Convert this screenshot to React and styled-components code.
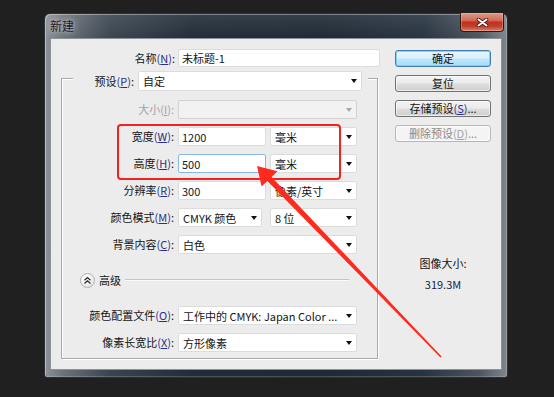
import React from "react";
import styled, { createGlobalStyle } from "styled-components";

const Global = createGlobalStyle`
  html, body { margin: 0; padding: 0; background: #202020; }
  body {
    width: 554px; height: 397px; overflow: hidden;
    font-family: "Noto Sans CJK SC", "Microsoft YaHei", sans-serif;
    font-size: 11px; color: #111;
  }
`;

const Stage = styled.div`
  position: relative;
  box-sizing: border-box;
  width: 554px;
  height: 397px;
  padding: 13px 0 0 44px;
`;

const Window = styled.div`
  box-sizing: border-box;
  width: 464px;
  height: 365px;
  display: flex;
  flex-direction: column;
  padding: 0 5px 7px 5px;
  border: 1px solid #2a3036;
  border-radius: 6px 6px 3px 3px;
  background:
    linear-gradient(to bottom, rgba(255,255,255,0.10), rgba(255,255,255,0) 26px),
    linear-gradient(to right, #8d9398 0%, #6b7279 4%, #3a4550 14%, #212c38 32%, #1e2935 60%, #27333f 82%, #4d5660 94%, #7f868c 100%);
  box-shadow: inset 1px 1px 0 rgba(255,255,255,0.35), inset -1px -1px 0 rgba(255,255,255,0.18);
`;

const TitleBar = styled.div`
  height: 24px;
  flex: none;
  display: flex;
  justify-content: space-between;
  align-items: flex-start;
`;

const Title = styled.div`
  padding-top: 4px;
  line-height: 16px;
  font-size: 12px;
  color: #1e1a2c;
  text-shadow: 0 0 4px rgba(200,202,208,0.9), 0 0 9px rgba(190,192,200,0.9);
`;

const CloseButton = styled.div`
  box-sizing: border-box;
  width: 44px;
  height: 19px;
  margin: -1px -2px 0 0;
  display: flex;
  align-items: center;
  justify-content: center;
  border: 1px solid #3b1410;
  border-top: none;
  border-radius: 0 0 4px 4px;
  background: linear-gradient(to bottom, #dd9a8a 0%, #cf6f5c 40%, #c2301b 52%, #c0412d 75%, #d8836c 100%);
  box-shadow: inset 0 0 0 1px rgba(255,200,190,0.35);
`;

const Client = styled.div`
  box-sizing: border-box;
  flex: 1;
  display: flex;
  align-items: flex-start;
  padding-top: 10px;
  background: #ececec;
  border: 1px solid #8c9298;
`;

const FormColumn = styled.div`
  width: 329px;
  display: flex;
  flex-direction: column;
`;

const NameRow = styled.div`
  display: flex;
  height: 18px;
`;

const Label = styled.div`
  box-sizing: border-box;
  width: ${(p) => p.$w}px;
  margin-right: ${(p) => p.$gap ?? 4}px;
  text-align: right;
  white-space: nowrap;
  line-height: ${(p) => p.$lh ?? 19}px;
  color: ${(p) => (p.$disabled ? "#a3a3a3" : "#141414")};
`;

const Mnemonic = styled.span`
  color: ${(p) => (p.$disabled ? "#a3a3a3" : "#2e2e86")};
`;

const Key = styled.span`
  text-decoration: underline;
`;

const Mn = ({ k, disabled }) => (
  <Mnemonic $disabled={disabled}>
    (<Key>{k}</Key>)
  </Mnemonic>
);

const TextField = styled.input`
  box-sizing: border-box;
  width: ${(p) => p.$w}px;
  height: 100%;
  margin: 0;
  padding: 0 0 0 3px;
  border: 1px solid ${(p) => (p.$focus ? "#86b7e6" : "#dcdcdc")};
  border-radius: 2px;
  background: #fff;
  font: 11px "Noto Sans CJK SC", "Microsoft YaHei", sans-serif;
  color: #141428;
  outline: none;
`;

const Select = styled.div`
  box-sizing: border-box;
  width: ${(p) => p.$w}px;
  height: 100%;
  margin-left: ${(p) => p.$ml ?? 0}px;
  display: flex;
  align-items: center;
  justify-content: space-between;
  padding: 0 4px 0 4px;
  background: ${(p) => (p.$disabled ? "#f2f2f2" : "#fff")};
  border: 1px solid ${(p) => (p.$disabled ? "#d2d2d2" : "#dcdcdc")};
  border-radius: 2px;
  white-space: nowrap;
  color: #141414;
`;

const Caret = styled.span`
  flex: none;
  width: 0;
  height: 0;
  border-left: 3.5px solid transparent;
  border-right: 3.5px solid transparent;
  border-top: 4px solid ${(p) => (p.$disabled ? "#a8a8a8" : "#111")};
`;

const GroupBox = styled.div`
  box-sizing: border-box;
  width: 317px;
  margin: 11px 0 0 10px;
  padding-bottom: 6px;
  border: 1px solid #a9a9a9;
  box-shadow: inset 1px 1px 0 #fff, 1px 1px 0 #fff;
  display: flex;
  flex-direction: column;
`;

const PresetRow = styled.div`
  display: flex;
  width: 295px;
  height: 20px;
  margin: -8px 0 9px 11px;
  background: #ececec;
`;

const Rows = styled.div`
  display: flex;
  flex-direction: column;
  gap: 8px;
`;

const Row = styled.div`
  display: flex;
  height: 19px;
`;

const AdvRow = styled.div`
  display: flex;
  align-items: center;
  height: 14px;
  margin: 19px 28px 19px 18px;
`;

const AdvIcon = styled.div`
  box-sizing: border-box;
  width: 15px;
  height: 15px;
  flex: none;
  border-radius: 50%;
  border: 1px solid #b0b0b0;
  background: radial-gradient(circle at 40% 35%, #ffffff 0%, #f4f4f4 45%, #d6d6d6 100%);
  display: flex;
  align-items: center;
  justify-content: center;
`;

const AdvText = styled.span`
  margin-left: 4px;
  line-height: 14px;
  color: #141414;
`;

const AdvLine = styled.div`
  flex: 1;
  height: 1px;
  margin-left: 4px;
  background: #c4c4c4;
  border-bottom: 1px solid #fbfbfb;
`;

const ButtonColumn = styled.div`
  width: 96px;
  margin: 1px 0 0 15px;
  display: flex;
  flex-direction: column;
  gap: 8px;
`;

const Button = styled.div`
  box-sizing: border-box;
  height: 17px;
  display: flex;
  align-items: center;
  justify-content: center;
  border-radius: 3px;
  white-space: nowrap;
  border: 1px solid ${(p) => (p.$primary ? "#3d7fb3" : p.$disabled ? "#b4b8bb" : "#717171")};
  color: ${(p) => (p.$disabled ? "#8a8a8a" : "#141414")};
  background: ${(p) =>
    p.$primary
      ? "linear-gradient(to bottom, #eaf6fd 0%, #d9f0fc 48%, #bee6fd 52%, #a9dbf6 100%)"
      : p.$disabled
      ? "#f4f4f4"
      : "linear-gradient(to bottom, #f3f3f3 0%, #ebebeb 48%, #dddddd 52%, #cfcfcf 100%)"};
  box-shadow: ${(p) => (p.$primary ? "inset 0 0 0 1px rgba(120,200,240,0.8)" : "inset 0 0 0 1px rgba(255,255,255,0.6)")};
  line-height: 15px;
`;

const SizeInfo = styled.div`
  margin-top: 105px;
  display: flex;
  flex-direction: column;
  align-items: center;
  gap: 5px;
  line-height: 16px;
`;

const SizeValue = styled.span`
  color: #1c1c3e;
`;

const RedFrame = styled.div`
  position: absolute;
  left: 117px;
  top: 124px;
  width: 224px;
  height: 56px;
  box-sizing: border-box;
  border: 2.5px solid #f2231f;
  border-radius: 4px;
  pointer-events: none;
`;

const ArrowLayer = styled.svg`
  position: absolute;
  left: 0;
  top: 0;
  pointer-events: none;
`;

function arrowPoints() {
  const T = [257, 166];
  const E = [441, 357];
  const dx = E[0] - T[0];
  const dy = E[1] - T[1];
  const len = Math.hypot(dx, dy);
  const u = [dx / len, dy / len];
  const n = [u[1], -u[0]];
  const B = [T[0] + 18 * u[0], T[1] + 18 * u[1]];
  const p = (c, k) => [c[0] + k * n[0], c[1] + k * n[1]];
  const pts = [T, p(B, 11), p(B, 3), p(E, 0.8), p(E, -0.8), p(B, -3), p(B, -11)];
  return pts.map((q) => q.map((v) => v.toFixed(1)).join(",")).join(" ");
}

export default function App() {
  return (
    <>
      <Global />
      <Stage>
        <Window>
          <TitleBar>
            <Title>新建</Title>
            <CloseButton>
              <svg width="13" height="9" viewBox="0 0 13 9">
                <path d="M2.5 1.5 L10.5 7.5 M10.5 1.5 L2.5 7.5" stroke="#4a1610" strokeWidth="3.6" strokeLinecap="round" />
                <path d="M2.5 1.5 L10.5 7.5 M10.5 1.5 L2.5 7.5" stroke="#ffffff" strokeWidth="2" strokeLinecap="round" />
              </svg>
            </CloseButton>
          </TitleBar>
          <Client>
            <FormColumn>
              <NameRow>
                <Label $w={124} $gap={3} $lh={18}>
                  名称<Mn k="N" />:
                </Label>
                <TextField $w={202} value="未标题-1" readOnly />
              </NameRow>
              <GroupBox>
                <PresetRow>
                  <Label $w={61} $lh={20}>
                    预设<Mn k="P" />:
                  </Label>
                  <Select $w={224}>
                    <span>自定</span>
                    <Caret />
                  </Select>
                </PresetRow>
                <Rows>
                  <Row>
                    <Label $w={112} $disabled>
                      大小<Mn k="I" disabled />:
                    </Label>
                    <Select $w={179} $disabled>
                      <span />
                      <Caret $disabled />
                    </Select>
                  </Row>
                  <Row>
                    <Label $w={112}>
                      宽度<Mn k="W" />:
                    </Label>
                    <TextField $w={88} value="1200" readOnly />
                    <Select $w={87} $ml={4}>
                      <span>毫米</span>
                      <Caret />
                    </Select>
                  </Row>
                  <Row>
                    <Label $w={112}>
                      高度<Mn k="H" />:
                    </Label>
                    <TextField $w={88} $focus value="500" readOnly />
                    <Select $w={87} $ml={4}>
                      <span>毫米</span>
                      <Caret />
                    </Select>
                  </Row>
                  <Row>
                    <Label $w={112}>
                      分辨率<Mn k="R" />:
                    </Label>
                    <TextField $w={88} value="300" readOnly />
                    <Select $w={87} $ml={4}>
                      <span>像素/英寸</span>
                      <Caret />
                    </Select>
                  </Row>
                  <Row>
                    <Label $w={112}>
                      颜色模式<Mn k="M" />:
                    </Label>
                    <Select $w={84}>
                      <span>CMYK 颜色</span>
                      <Caret />
                    </Select>
                    <Select $w={87} $ml={8}>
                      <span>8 位</span>
                      <Caret />
                    </Select>
                  </Row>
                  <Row>
                    <Label $w={112}>
                      背景内容<Mn k="C" />:
                    </Label>
                    <Select $w={179}>
                      <span>白色</span>
                      <Caret />
                    </Select>
                  </Row>
                </Rows>
                <AdvRow>
                  <AdvIcon>
                    <svg width="9" height="9" viewBox="0 0 9 9">
                      <path d="M1.5 4.2 L4.5 1.6 L7.5 4.2 M1.5 7.4 L4.5 4.8 L7.5 7.4" fill="none" stroke="#2a2a2a" strokeWidth="1.3" />
                    </svg>
                  </AdvIcon>
                  <AdvText>高级</AdvText>
                  <AdvLine />
                </AdvRow>
                <Rows>
                  <Row>
                    <Label $w={112}>
                      颜色配置文件<Mn k="O" />:
                    </Label>
                    <Select $w={179}>
                      <span>工作中的 CMYK: Japan Color ...</span>
                      <Caret />
                    </Select>
                  </Row>
                  <Row>
                    <Label $w={112}>
                      像素长宽比<Mn k="X" />:
                    </Label>
                    <Select $w={179}>
                      <span>方形像素</span>
                      <Caret />
                    </Select>
                  </Row>
                </Rows>
              </GroupBox>
            </FormColumn>
            <ButtonColumn>
              <Button $primary>确定</Button>
              <Button>复位</Button>
              <Button>
                存储预设<Mn k="S" />...
              </Button>
              <Button $disabled>
                删除预设<Mn k="D" disabled />...
              </Button>
              <SizeInfo>
                <span>图像大小:</span>
                <SizeValue>319.3M</SizeValue>
              </SizeInfo>
            </ButtonColumn>
          </Client>
        </Window>
        <RedFrame />
        <ArrowLayer width="554" height="397" viewBox="0 0 554 397">
          <polygon points={arrowPoints()} fill="#ff2a1e" />
        </ArrowLayer>
      </Stage>
    </>
  );
}
